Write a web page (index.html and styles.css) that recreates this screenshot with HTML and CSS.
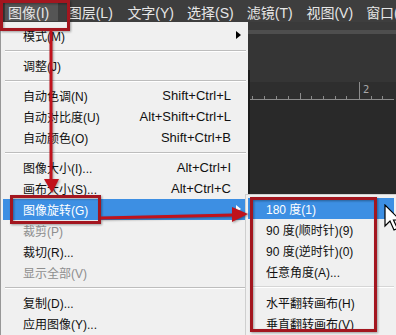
FILE: index.html
```html
<!DOCTYPE html>
<html lang="zh-CN">
<head>
  <meta charset="UTF-8">
  <title>图像 - 图像旋转</title>
  <link rel="stylesheet" href="styles.css">
</head>
<body>
<div class="screen">

  <nav class="menubar">
    <span class="top-item active">图像(I)</span>
    <span class="top-item">图层(L)</span>
    <span class="top-item">文字(Y)</span>
    <span class="top-item">选择(S)</span>
    <span class="top-item">滤镜(T)</span>
    <span class="top-item">视图(V)</span>
    <span class="top-item">窗口(W)</span>
  </nav>

  <div class="workspace">
    <!-- Image menu -->
    <ul class="menu">
      <li class="item has-sub"><span>模式(M)</span></li>
      <li class="sep"></li>
      <li class="item"><span>调整(J)</span></li>
      <li class="sep"></li>
      <li class="item"><span>自动色调(N)</span><span class="key">Shift+Ctrl+L</span></li>
      <li class="item"><span>自动对比度(U)</span><span class="key">Alt+Shift+Ctrl+L</span></li>
      <li class="item"><span>自动颜色(O)</span><span class="key">Shift+Ctrl+B</span></li>
      <li class="sep"></li>
      <li class="item"><span>图像大小(I)...</span><span class="key">Alt+Ctrl+I</span></li>
      <li class="item"><span>画布大小(S)...</span><span class="key">Alt+Ctrl+C</span></li>
      <li class="item has-sub active"><span>图像旋转(G)</span></li>
      <li class="item disabled"><span>裁剪(P)</span></li>
      <li class="item"><span>裁切(R)...</span></li>
      <li class="item disabled"><span>显示全部(V)</span></li>
      <li class="sep"></li>
      <li class="item"><span>复制(D)...</span></li>
      <li class="item"><span>应用图像(Y)...</span></li>
    </ul>

    <div class="doc">
      <div class="optbar"></div>
      <div class="optstrip"></div>
      <div class="panel"></div>
      <div class="docwin">
        <div class="tabstrip"></div>
        <div class="ruler">
          <svg class="ticks" width="144" height="18" viewBox="0 0 144 18">
            <line x1="0" y1="17.5" x2="144" y2="17.5" stroke="#8c8c8c" stroke-width="1"/>
            <g stroke="#8c8c8c" stroke-width="1">
              <line x1="2.5" y1="14" x2="2.5" y2="17"/>
              <line x1="14.5" y1="14" x2="14.5" y2="17"/>
              <line x1="26.5" y1="14" x2="26.5" y2="17"/>
              <line x1="38.5" y1="14" x2="38.5" y2="17"/>
              <line x1="50.5" y1="11" x2="50.5" y2="17"/>
              <line x1="61.5" y1="14" x2="61.5" y2="17"/>
              <line x1="73.5" y1="14" x2="73.5" y2="17"/>
              <line x1="85.5" y1="14" x2="85.5" y2="17"/>
              <line x1="96.5" y1="14" x2="96.5" y2="17"/>
              <line x1="109.5" y1="0" x2="109.5" y2="17"/>
              <line x1="121.5" y1="14" x2="121.5" y2="17"/>
              <line x1="132.5" y1="14" x2="132.5" y2="17"/>
            </g>
          </svg>
          <span class="ruler-num">2</span>
        </div>
        <div class="canvas"></div>
      </div>
    </div>
  </div>

  <!-- Image Rotation submenu -->
  <ul class="submenu">
    <li class="item active"><span>180 度(1)</span></li>
    <li class="item"><span>90 度(顺时针)(9)</span></li>
    <li class="item"><span>90 度(逆时针)(0)</span></li>
    <li class="item"><span>任意角度(A)...</span></li>
    <li class="sep"></li>
    <li class="item"><span>水平翻转画布(H)</span></li>
    <li class="item"><span>垂直翻转画布(V)</span></li>
  </ul>

  <!-- red annotations -->
  <svg class="marks" width="396" height="335" viewBox="0 0 396 335">
    <g fill="none" stroke="#a3161f" stroke-width="3">
      <rect x="1.5" y="1.5" width="67" height="28"/>
      <rect x="11.5" y="196.5" width="88" height="26"/>
      <rect x="251.5" y="198.5" width="124" height="132"/>
    </g>
    <g stroke="#c0121c" stroke-width="3" fill="#c0121c">
      <line x1="51" y1="30" x2="51" y2="181"/>
      <polygon stroke="none" points="44,179 59,179 52,193"/>
      <line x1="101" y1="218" x2="234" y2="215"/>
      <polygon stroke="none" points="232,207 232,222 248,214"/>
    </g>
  </svg>

  <svg class="cursor" width="17" height="27" viewBox="0 0 17 27">
    <path d="M1 1 L1 22 L6 17 L10 26 L13.5 24.5 L9.5 16 L16 16 Z" fill="#fff" stroke="#000" stroke-width="1.2" stroke-linejoin="miter"/>
  </svg>

</div>
</body>
</html>
```

FILE: styles.css
```css
:root {
  --menu-bg: #f0f0f0;
  --hl: #3d8fe3;
  --dark: #2a2a2a;
}
* {
  box-sizing: border-box;
}
body {
  margin: 0;
  background: var(--dark);
  font-family: "Liberation Sans", "Noto Sans CJK SC", sans-serif;
}
.screen {
  position: relative;
  width: 396px;
  height: 335px;
  overflow: hidden;
}

/* top menu bar */
.menubar {
  display: flex;
  height: 22px;
  padding-left: 5px;
  background: #3e3e3e;
}
.top-item {
  flex: none;
  width: 53px;
  height: 18px;
  margin: 3px 6.7px 0 0;
  padding-left: 3px;
  font-size: 14px;
  line-height: 20px;
  color: #e6e6e6;
  white-space: nowrap;
}
.top-item.active {
  background: #555;
}

.workspace {
  display: flex;
  height: 313px;
}

/* dropdown menu */
.menu, .submenu {
  margin: 0;
  list-style: none;
  background: var(--menu-bg);
  font-size: 12px;
  color: #111;
}
.menu {
  flex: none;
  width: 248px;
  padding: 3px 2px 0 2px;
  border-left: 1px solid #979797;
}
.item {
  position: relative;
  display: flex;
  justify-content: space-between;
  align-items: center;
  height: 21px;
  padding: 0 15px 0 20px;
  white-space: nowrap;
}
.key {
  font-size: 13px;
}
.sep {
  height: 2px;
  margin: 4px 0 3px 2px;
  border-top: 1px solid #bdbdbd;
  border-bottom: 1px solid #fff;
}
.disabled {
  color: #8e8e8e;
}
.item.active {
  background: var(--hl);
  color: #fff;
}
.has-sub::after {
  content: "";
  position: absolute;
  right: 5px;
  top: 6px;
  border-left: 5px solid #000;
  border-top: 4px solid transparent;
  border-bottom: 4px solid transparent;
}
.has-sub.active::after {
  border-left-color: #fff;
}

/* document area */
.doc {
  flex: 1;
  display: flex;
  flex-direction: column;
}
.optbar {
  height: 8px;
  background: #3a3a3a;
}
.optstrip {
  height: 4px;
  background: #4e4e4e;
}
.panel {
  height: 36px;
  background: #353535;
}
.docwin {
  flex: 1;
  display: flex;
  flex-direction: column;
  border-left: 2px solid #1b1b1b;
}
.tabstrip {
  height: 12px;
  background: #353535;
}
.ruler {
  position: relative;
  height: 18px;
  background: #2e2e2e;
}
.ticks {
  display: block;
}
.ruler-num {
  position: absolute;
  left: 113px;
  top: 2px;
  font-size: 10px;
  color: #a8a8a8;
  font-family: "DejaVu Sans", sans-serif;
}
.canvas {
  flex: 1;
  background: #292929;
}

/* submenu */
.submenu {
  position: absolute;
  left: 245px;
  top: 194px;
  width: 152px;
  height: 150px;
  padding: 3px 2px;
  border: 1px solid #cfcfcf;
}
.submenu .item {
  padding-left: 18px;
}
.submenu .sep {
  margin: 4px 0 4px 2px;
  border-top-color: #d6d6d6;
}

/* overlays */
.marks {
  position: absolute;
  left: 0;
  top: 0;
  filter: drop-shadow(1px 1px 1px rgba(0, 0, 0, 0.35));
}
.cursor {
  position: absolute;
  left: 384px;
  top: 204px;
}
```
